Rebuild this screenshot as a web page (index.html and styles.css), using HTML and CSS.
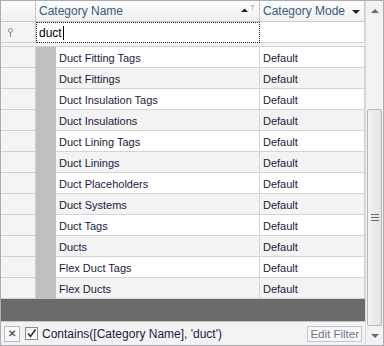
FILE: index.html
```html
<!DOCTYPE html>
<html lang="en">
<head>
  <meta charset="UTF-8" />
  <title>Category Grid</title>
  <link rel="stylesheet" href="styles.css">
</head>
<body>
  <div class="grid-frame">
    <div class="grid-main">
      <div class="row header-row">
        <div class="ind"></div>
        <div class="cell name-col head">
          <span>Category Name</span>
          <span class="head-icons">
            <svg width="16" height="10" viewBox="0 0 16 10">
              <path d="M0 8 L3.5 4.5 L7 8 Z" fill="#222"/>
              <path d="M9 1 H14 L12 3.5 V6 H11 V3.5 Z" fill="#c4c4c4"/>
            </svg>
          </span>
        </div>
        <div class="cell mode-col head">
          <span>Category Mode</span>
          <svg class="drop" width="8" height="5" viewBox="0 0 8 5"><path d="M0 0 H8 L4 4 Z" fill="#222"/></svg>
        </div>
      </div>

      <div class="row filter-row">
        <div class="ind">
          <svg width="7" height="9" viewBox="0 0 7 9">
            <circle cx="3.5" cy="2.5" r="2" fill="none" stroke="#8a8a8a" stroke-width="1"/>
            <path d="M3.5 4.5 V9" stroke="#8a8a8a" stroke-width="1"/>
          </svg>
        </div>
        <div class="cell name-col editing">duct<span class="caret"></span></div>
        <div class="cell mode-col"></div>
      </div>

      <div class="filter-gap"></div>

      <div class="rows" id="rows"></div>

      <div class="empty-area"></div>

      <div class="filter-panel">
        <span class="close-box">&#x2715;</span>
        <span class="check-box">
          <svg width="11" height="11" viewBox="0 0 11 11"><path d="M2 5.5 L4.5 8.5 L9.5 1.5" fill="none" stroke="#333" stroke-width="1.6"/></svg>
        </span>
        <span class="filter-text">Contains([Category Name], 'duct')</span>
        <span class="edit-filter">Edit Filter</span>
      </div>
    </div>

    <div class="vscroll">
      <div class="arrow">
        <svg width="8" height="5" viewBox="0 0 8 5"><path d="M0 5 H8 L4 1 Z" fill="#6a6a6a"/></svg>
      </div>
      <div class="track-top"></div>
      <div class="thumb">
        <span class="grip"></span>
      </div>
      <div class="arrow">
        <svg width="8" height="5" viewBox="0 0 8 5"><path d="M0 0 H8 L4 4 Z" fill="#6a6a6a"/></svg>
      </div>
    </div>
  </div>

  <script>
    const categories = [
      'Duct Fitting Tags', 'Duct Fittings', 'Duct Insulation Tags', 'Duct Insulations',
      'Duct Lining Tags', 'Duct Linings', 'Duct Placeholders', 'Duct Systems',
      'Duct Tags', 'Ducts', 'Flex Duct Tags', 'Flex Ducts'
    ];

    const rows = document.getElementById('rows');
    categories.forEach((name, i) => {
      const row = document.createElement('div');
      row.className = 'row data-row' + (i % 2 ? ' alt' : '');
      row.innerHTML =
        '<div class="ind"></div>' +
        '<div class="band"></div>' +
        '<div class="cell name-col data"></div>' +
        '<div class="cell mode-col data">Default</div>';
      row.querySelector('.name-col').textContent = name;
      rows.appendChild(row);
    });
  </script>
</body>
</html>
```

FILE: styles.css
```css
* {
  margin: 0;
  padding: 0;
  box-sizing: border-box;
}
body {
  font-family: "Liberation Sans", Arial, sans-serif;
  font-size: 11px;
  background: #ffffff;
}
.grid-frame {
  width: 384px;
  height: 346px;
  border: 1px solid #a9aeb5;
  display: flex;
  background: #ffffff;
}
.grid-main {
  width: 364px;
  display: flex;
  flex-direction: column;
}
.row {
  display: flex;
  height: 21px;
}
.ind {
  width: 35px;
  flex: none;
  background: #f4f4f4;
  border-right: 1px solid #d0d0d0;
  border-bottom: 1px solid #d0d0d0;
  display: flex;
  align-items: center;
  padding-left: 6px;
}
.cell {
  display: flex;
  align-items: center;
  border-bottom: 1px solid #d4d4d4;
  border-right: 1px solid #d4d4d4;
  white-space: nowrap;
  overflow: hidden;
}
.name-col {
  width: 224px;
  flex: none;
}
.mode-col {
  flex: 1;
  padding-left: 3px;
}

/* header */
.header-row .ind,
.head {
  background: linear-gradient(#fbfbfb, #f1f1f1);
  border-bottom: 1px solid #c9c9c9;
  border-right: 1px solid #c9c9c9;
}
.head {
  color: #3c5a7e;
  font-size: 12px;
  padding-left: 3px;
  position: relative;
}
.head-icons {
  position: absolute;
  right: 2px;
  top: 2px;
}
.head .drop {
  position: absolute;
  right: 4px;
  top: 9px;
}

/* filter row */
.filter-row .ind {
  border-bottom: 1px solid #d0d0d0;
}
.editing {
  border: 1px dotted #222;
  padding-left: 2px;
  font-size: 12px;
  color: #000;
}
.caret {
  display: inline-block;
  width: 1px;
  height: 14px;
  background: #000;
  margin-left: 1px;
}
.filter-row .mode-col {
  border-bottom: 1px solid #d4d4d4;
}
.filter-gap {
  height: 4px;
  background: #f4f4f4;
  border-bottom: 1px solid #d0d0d0;
}

/* data rows */
.rows {
  display: flex;
  flex-direction: column;
}
.data-row .ind {
  width: 35px;
}
.band {
  width: 20px;
  flex: none;
  background: #c0c0c0;
}
.data-row .name-col {
  width: 204px;
  padding-left: 3px;
  padding-top: 1px;
}
.data-row .mode-col {
  padding-top: 1px;
}
.data {
  color: #1b1b3a;
  background: #ffffff;
}
.alt .data {
  background: #f3f3f3;
}

.empty-area {
  height: 22px;
  background: #6b6b6b;
}

/* filter panel */
.filter-panel {
  flex: 1;
  display: flex;
  align-items: center;
  background: #f3f3f3;
  border-top: 1px solid #c6c6c6;
  padding: 0 3px 0 3px;
  color: #1b1b3a;
  font-size: 12px;
}
.close-box {
  width: 16px;
  height: 16px;
  border: 1px solid #b9b9b9;
  background: #fafafa;
  color: #5a5a5a;
  font-size: 10px;
  font-weight: bold;
  display: flex;
  align-items: center;
  justify-content: center;
  margin-right: 5px;
}
.check-box {
  width: 13px;
  height: 13px;
  border: 1px solid #8c8c8c;
  background: linear-gradient(#f0f0f0, #ffffff);
  display: flex;
  align-items: center;
  justify-content: center;
  margin-right: 4px;
}
.filter-text {
  flex: 1;
}
.edit-filter {
  border: 1px solid #c3c8ce;
  color: #6e7a88;
  padding: 1px 2px;
  background: #f7f7f7;
  font-size: 11.5px;
}

/* vertical scrollbar */
.vscroll {
  width: 18px;
  background: #f2f2f2;
  border-left: 1px solid #d8d8d8;
  display: flex;
  flex-direction: column;
  align-items: center;
}
.arrow {
  height: 18px;
  display: flex;
  align-items: center;
  justify-content: center;
}
.track-top {
  height: 90px;
}
.thumb {
  width: 15px;
  height: 217px;
  border: 1px solid #b7b7b7;
  border-radius: 2px;
  background: linear-gradient(90deg, #f2f2f2, #e4e4e4);
  display: flex;
  align-items: center;
  justify-content: center;
}
.grip {
  width: 8px;
  height: 7px;
  border-top: 1px solid #6b6b6b;
  border-bottom: 1px solid #6b6b6b;
  background: linear-gradient(#6b6b6b, #6b6b6b) center / 8px 1px no-repeat;
}
.vscroll .arrow:last-child {
  margin-top: auto;
}
```
